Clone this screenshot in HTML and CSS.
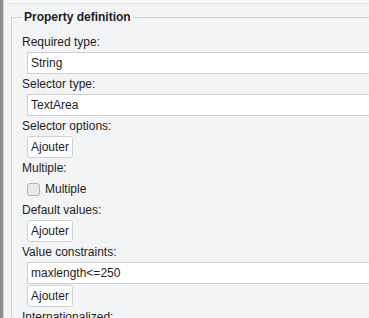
FILE: index.html
```html
<!DOCTYPE html>
<html>
<head>
<meta charset="utf-8">
<link rel="stylesheet" href="styles.css">
</head>
<body>
<div class="frame">
  <div class="topstrip"></div>
  <fieldset class="group">
    <legend class="group-title">Property definition</legend>
    <label class="field-label">Required type:</label>
    <input class="text-input" type="text" value="String">
    <label class="field-label">Selector type:</label>
    <input class="text-input" type="text" value="TextArea">
    <label class="field-label">Selector options:</label>
    <button class="btn">Ajouter</button>
    <label class="field-label">Multiple:</label>
    <div class="check-row">
      <input class="check" type="checkbox" id="mult">
      <label class="check-label" for="mult">Multiple</label>
    </div>
    <label class="field-label">Default values:</label>
    <button class="btn">Ajouter</button>
    <label class="field-label">Value constraints:</label>
    <input class="text-input" type="text" value="maxlength&lt;=250">
    <button class="btn btn-after-input">Ajouter</button>
    <label class="field-label">Internationalized:</label>
  </fieldset>
</div>
</body>
</html>
```

FILE: styles.css
```css
html, body {
  margin: 0;
  padding: 0;
}
body {
  background: #f3f4f6;
  overflow: hidden;
  font-family: "Liberation Sans", Arial, sans-serif;
  font-size: 12px;
  color: #1e1e1e;
}
.frame {
  border-left: 3px solid #8e8e8e;
  height: 318px;
  overflow: hidden;
  box-shadow: inset 1px 0 0 #d6d6d6;
}
.topstrip {
  height: 3px;
  margin-left: 4px;
  background: #fafafa;
  border-bottom: 1px solid #e6e6e8;
}
.group {
  margin: 6px 0 0 8px;
  padding: 8px 0 0 10px;
  border: 1px solid #d3d3d3;
  border-right: none;
  border-bottom: none;
  min-width: 0;
}
.group-title {
  font-weight: bold;
  font-size: 12px;
  line-height: 14px;
  padding: 0 2px;
  color: #1e1e1e;
}
.field-label {
  display: block;
  height: 20px;
  line-height: 20px;
  white-space: nowrap;
}
.text-input {
  display: block;
  box-sizing: border-box;
  width: calc(100% - 5px);
  height: 22px;
  margin: 0 0 0 5px;
  padding: 0 3px;
  border: 1px solid #cdcdcd;
  border-right: none;
  background: #fff;
  font-family: inherit;
  font-size: 12px;
  color: #1e1e1e;
  outline: none;
}
.btn {
  display: block;
  box-sizing: border-box;
  height: 22px;
  width: 46px;
  margin: 0 0 0 5px;
  padding: 0;
  border: 1px solid #d0d0d0;
  border-radius: 3px;
  background: #fff;
  font-family: inherit;
  font-size: 12px;
  color: #1e1e1e;
}
.btn-after-input {
  margin-top: 1px;
}
.check-row {
  display: flex;
  align-items: center;
  height: 22px;
  padding-left: 5px;
}
.check {
  appearance: none;
  -webkit-appearance: none;
  box-sizing: border-box;
  width: 13px;
  height: 13px;
  margin: 0 5px 0 0;
  border: 1px solid #b4b4b4;
  border-radius: 3px;
  background: #e9e9e9;
}
.check-label {
  line-height: 22px;
}
```
